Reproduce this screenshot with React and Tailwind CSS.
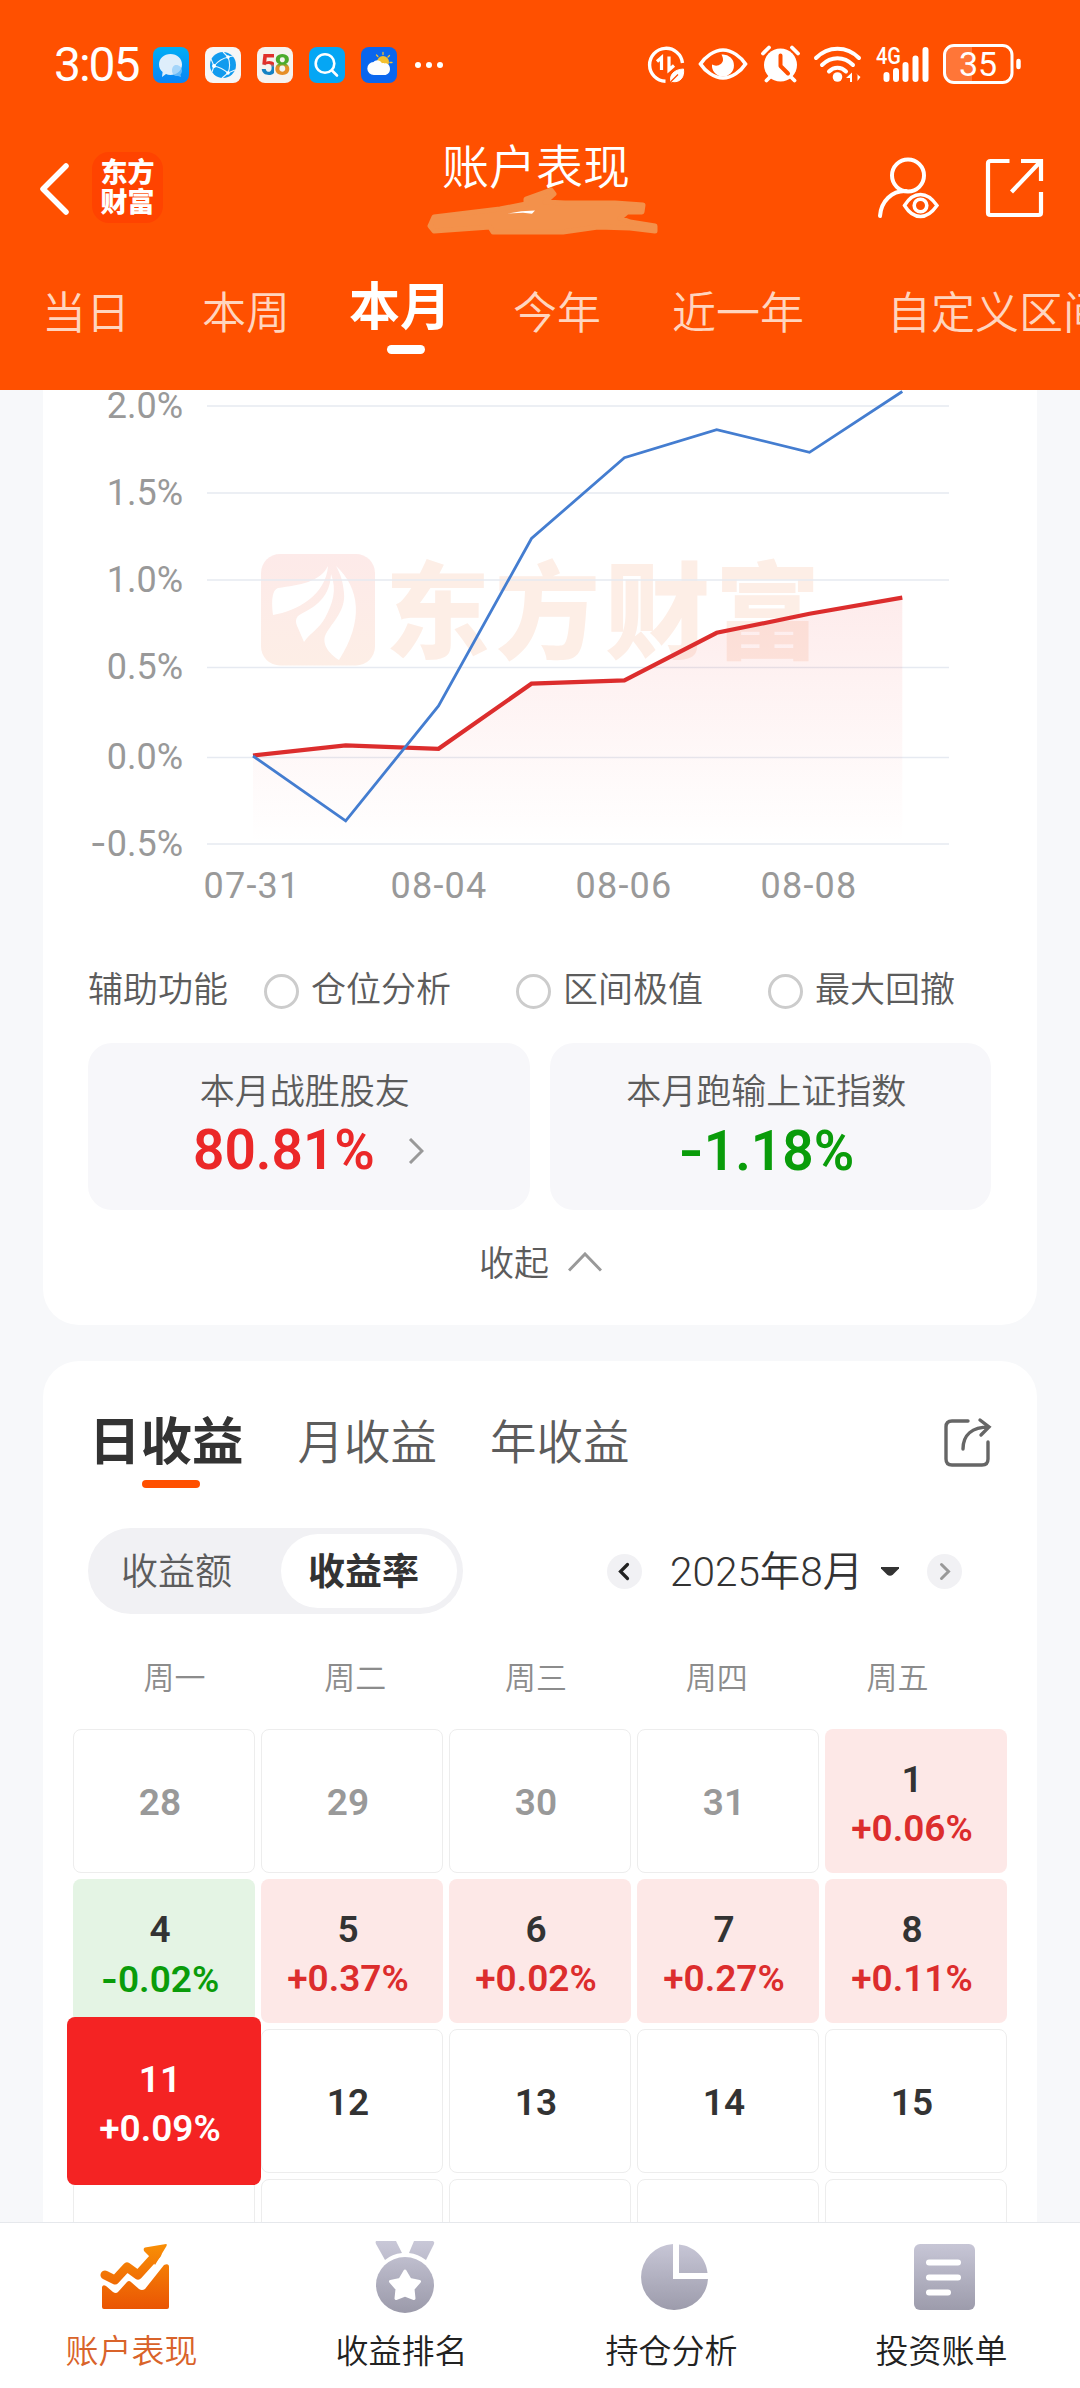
import { useState } from 'react';
import clsx from 'clsx';

const RANGES = [
  { label: '当日', className: 'ml-[42px]' },
  { label: '本周', className: 'ml-[72px]' },
  { label: '本月', className: 'ml-[59px]' },
  { label: '今年', className: 'ml-[62px]' },
  { label: '近一年', className: 'ml-[71px]' },
  { label: '自定义区间', className: 'ml-[83px]' },
];

const Y_TICKS = [
  { label: '2.0%', y: 406 },
  { label: '1.5%', y: 493 },
  { label: '1.0%', y: 580 },
  { label: '0.5%', y: 667.5 },
  { label: '0.0%', y: 757.5 },
  { label: '-0.5%', y: 844 },
];

const X_TICKS = [
  { label: '07-31', x: 252 },
  { label: '08-04', x: 439 },
  { label: '08-06', x: 624 },
  { label: '08-08', x: 809 },
];

const INDEX_LINE = '253,756 345.7,820.8 438.5,706 531.5,538.5 624.4,457.7 716.7,429.6 809.5,452.3 902.3,391.5';
const ACCOUNT_LINE = '253,755.5 345.7,745.4 438.5,748.8 531.5,683.7 624.4,680.3 716.7,632.8 809.5,613.8 902.3,597.6';

const WEEKDAYS = ['周一', '周二', '周三', '周四', '周五'];

const DAYS = [
  { day: 28, muted: true },
  { day: 29, muted: true },
  { day: 30, muted: true },
  { day: 31, muted: true },
  { day: 1, rate: '+0.06%' },
  { day: 4, rate: '-0.02%' },
  { day: 5, rate: '+0.37%' },
  { day: 6, rate: '+0.02%' },
  { day: 7, rate: '+0.27%' },
  { day: 8, rate: '+0.11%' },
  { day: 11, rate: '+0.09%' },
  { day: 12 },
  { day: 13 },
  { day: 14 },
  { day: 15 },
  { day: 18 },
  { day: 19 },
  { day: 20 },
  { day: 21 },
  { day: 22 },
];

function AppIcons() {
  return (
    <div className="flex gap-4">
      <svg className="w-9 h-9" viewBox="0 0 36 36">
        <defs>
          <linearGradient id="msg" x1="0" y1="0" x2="0" y2="1">
            <stop offset="0" stopColor="#00aef5" />
            <stop offset="1" stopColor="#0a84f5" />
          </linearGradient>
        </defs>
        <rect width="36" height="36" rx="8" fill="url(#msg)" />
        <path d="M17.500 7c6.500 0 11.500 4.500 11.500 10.500S24 28 17.500 28c-1.800 0-3.200-.3-4.500-.9L9 30l.6-5C7.300 23 6 20.500 6 17.500 6 11.500 11 7 17.500 7z" fill="#deeefb" />
        <path d="M23 18c3.500 0 6 2.500 6 5.500 0 1.600-.6 3-1.500 4l.5 2.500-3-1c-3 .6-6-1.500-6-5.500 0-3 1.500-5.500 4-5.500z" fill="#8ccbf9" opacity=".7" />
      </svg>
      <svg className="w-9 h-9" viewBox="0 0 36 36">
        <rect width="36" height="36" rx="8" fill="#f6f6f6" />
        <circle cx="18" cy="18" r="13" fill="#129bee" />
        <g fill="none" stroke="#e8f5fd" strokeWidth="1.100">
          <path d="M9 19C13 14 18 11 24 10M9 19c5 1 10 3.500 14 7M23 10c2 5 2 11 0 16M9 19 6 12M9 19l-2 6M23 10l-5-5M23 10l5-1M23 26l-6 5M23 26l7-3" />
        </g>
        <circle cx="9" cy="19" r="2" fill="#fff" />
        <circle cx="23" cy="10" r="1.800" fill="#fff" />
        <circle cx="23" cy="26" r="1.800" fill="#fff" />
      </svg>
      <div className="w-9 h-9 rounded-lg bg-[#f5f3f0] flex items-center justify-center text-[29px] font-bold tracking-[-3px] leading-none">
        <span className="bg-linear-to-b from-[#e0302c] from-45% to-[#1583c4] to-55% bg-clip-text text-transparent">5</span>
        <span className="bg-linear-to-b from-[#4aab2c] from-45% to-[#e68f27] to-55% bg-clip-text text-transparent pr-[2px]">8</span>
      </div>
      <svg className="w-9 h-9" viewBox="0 0 36 36">
        <rect width="36" height="36" rx="8" fill="#05a6f4" />
        <circle cx="16" cy="16.500" r="9.300" fill="none" stroke="#fff" strokeWidth="2.600" />
        <path d="m23 23.500 5 5" stroke="#fff" strokeWidth="2.600" strokeLinecap="round" />
      </svg>
      <svg className="w-9 h-9" viewBox="0 0 36 36">
        <rect width="36" height="36" rx="8" fill="#0a66ee" />
        <circle cx="22" cy="15" r="6" fill="#f3c02f" />
        <path d="M22 5.500v2M15.500 8l1.400 1.500M28.500 8.500 27 10M31 15.500h-2" stroke="#f3c02f" strokeWidth="1.300" strokeLinecap="round" />
        <path d="M13 28a6.500 6.500 0 0 1-.4-13c1.700-2.500 6.400-2.800 8.400 1.200 1-.4 2-.3 2.500.2C27 16 29 18.800 29 22c0 3.500-2.500 6-5.500 6z" fill="#fdfdfd" />
      </svg>
    </div>
  );
}

function StatusIcons() {
  return (
    <svg className="w-[380px] h-[50px]" viewBox="645 40 380 50" fill="none" stroke="#fff">
      {/* data saver */}
      <path d="M682.500 63a16.500 16.500 0 1 0-17 18.300" strokeWidth="3.400" />
      <path d="M661.500 70V57.500l-4.500 4M669 56.500V70l5-4.500" strokeWidth="3.200" />
      <path d="M671 82c-2-7 3-12.500 12.500-13 1 8-3 14-11.500 12.500z" strokeWidth="1" fill="#fff" />
      <path d="m670.500 82 7.500-7.500" stroke="#ff5000" strokeWidth="1.200" />
      {/* eye comfort */}
      <path d="M700.500 64c4.500-7 13.500-14 22.500-14s18 7 22.500 14c-4.500 7-13.500 14-22.500 14s-18-7-22.500-14z" strokeWidth="3.600" />
      <path d="M722.500 54.500a11 11 0 1 1-10.500 10c5 3 11-.5 11-4.500 0-2-.5-3.500-1.500-5.500z" fill="#fff" stroke="none" />
      {/* alarm */}
      <circle cx="780.500" cy="65" r="16.500" fill="#fff" stroke="none" />
      <path d="m763 53.500 6-6M798 53.500l-6-6M770 77l-3.500 3.500M791 77l3.500 3.500" strokeWidth="3.800" strokeLinecap="round" />
      <path d="M780.500 55.500V66l7.500 7.500" stroke="#ff5000" strokeWidth="4" strokeLinecap="round" strokeLinejoin="round" />
      {/* wifi */}
      <path d="M816 58c12-12.500 31-12.500 43 0M822 65c9-9 22-9 31 0M829 71.500c5-5 12-5 17 0" strokeWidth="4" strokeLinecap="round" />
      <circle cx="837.500" cy="77" r="4.800" fill="#fff" stroke="none" />
      <path d="M852 73v9h-2v-4h-4l6-5.500zM855.500 73l5 4-3 4v-6z" fill="#fff" stroke="none" />
      {/* signal */}
      <path d="M886.500 75v4M896 71v8M905.500 65v14M915.500 58.500V79M925.500 50v29" strokeWidth="6" strokeLinecap="round" />
      <text x="876" y="64" fontSize="24" fontWeight="500" fill="#fff" stroke="none" textLength="25" lengthAdjust="spacingAndGlyphs">4G</text>
      {/* battery */}
      <path d="M972 46H955q-10 0-10 10v16q0 10 10 10h17z" fill="#fff" fillOpacity=".22" stroke="none" />
      <rect x="944.500" y="45.500" width="67.500" height="37" rx="9.500" strokeWidth="3" />
      <path d="M1018.500 61v6" strokeWidth="4.500" strokeLinecap="round" />
      <text x="978" y="76" fontSize="34" fill="#fff" stroke="none" textAnchor="middle">35</text>
    </svg>
  );
}

function Header() {
  const [active, setActive] = useState('本月');

  return (
    <header className="h-[390px] bg-[#ff5000] text-white flex-shrink-0">
      <div className="h-[130px] pl-[54px] pr-[55px] flex items-center">
        <span className="w-[99px] text-[48px] leading-none tracking-[-2px]">3:05</span>
        <AppIcons />
        <div className="flex gap-[5px] ml-[18px]">
          <span className="w-1.5 h-1.5 rounded-full bg-white" />
          <span className="w-1.5 h-1.5 rounded-full bg-white" />
          <span className="w-1.5 h-1.5 rounded-full bg-white" />
        </div>
        <div className="ml-auto">
          <StatusIcons />
        </div>
      </div>

      <div className="h-[120px] pl-[37px] pr-[34px] flex items-start">
        <svg className="w-[36px] h-[56px] mt-[31px]" viewBox="0 0 36 56" fill="none" stroke="#fff" strokeWidth="5.500" strokeLinecap="round" strokeLinejoin="round">
          <path d="M29 5 6 28l23 23" />
        </svg>
        <div className="w-[71px] h-[71px] ml-[19px] mt-[22px] rounded-[17px] bg-[#ff4300] flex items-center justify-center text-[27px] leading-[30px] font-black text-center">
          东方
          <br />
          财富
        </div>
        <div className="relative ml-[279px] w-[188px] mt-[13px]">
          <h1 className="text-[47px] leading-[50px] font-[350] whitespace-nowrap">账户表现</h1>
          <svg className="absolute left-[-22px] top-[37px] w-[250px] h-[60px]" viewBox="420 180 250 60" strokeLinejoin="round">
            <path
              d="M434 217 500 209l26-5 0-5 25-9 3 4-9 8 20 1h50l28 2-1 7-15 0-7 6 10 4 25 4v5l-25-3-32-1-35 5h-70l-3-5-56 4-4-5z"
              fill="#f3914b"
              stroke="#f3914b"
              strokeWidth="5"
            />
            <path d="M508 213.500q13-3 27-3l-3 3.200-9-1z" fill="#fff" />
          </svg>
        </div>
        <svg className="ml-auto w-[66px] h-[66px] mt-[26px]" viewBox="876 156 66 66" fill="none" stroke="#fff" strokeWidth="4" strokeLinecap="round">
          <circle cx="909" cy="175.500" r="16" />
          <path d="M881 216c1-15 12-25.500 26-25" />
          <path d="M905.500 205.500c4-6.500 9.500-11 16-11s12 4.500 16.500 11c-4.500 6.500-10 11-16.500 11s-12-4.500-16-11z" strokeWidth="3.400" />
          <circle cx="921.500" cy="205.500" r="6.300" strokeWidth="3.600" />
        </svg>
        <svg className="ml-[43px] mr-[1px] w-[61px] h-[66px] mt-[26px]" viewBox="985 156 61 66" fill="none" stroke="#fff" strokeWidth="4.200">
          <path d="M1010.500 161h-19q-2.500 0-2.500 2.500v49q0 2.500 2.500 2.500h48q2.500 0 2.500-2.500V192M1022 161h20v20M1042 161l-29.500 31" />
        </svg>
      </div>

      <nav className="h-[140px] flex items-start overflow-hidden whitespace-nowrap">
        {RANGES.map(({ label, className }) => (
          <button
            key={label}
            onClick={() => setActive(label)}
            className={clsx(
              'flex flex-col items-center flex-shrink-0',
              className,
              active === label ? 'text-[51px] font-bold mt-[33px] leading-[50px]' : 'text-[44px] font-[350] mt-[39px] leading-[50px] text-[#ffd5bf]'
            )}
          >
            {label}
            {active === label && <span className="w-[38px] h-[9px] mt-[12px] ml-[12px] rounded-full bg-white" />}
          </button>
        ))}
      </nav>
    </header>
  );
}

function Chart() {
  return (
    <svg className="block w-[994px] h-[540px]" viewBox="43 390 994 540">
      <defs>
        <linearGradient id="logo" x1="0" y1="0" x2="0" y2="1">
          <stop offset="0" stopColor="#fdeae9" />
          <stop offset="1" stopColor="#fdeee6" />
        </linearGradient>
        <linearGradient id="area" gradientUnits="userSpaceOnUse" x1="0" y1="598" x2="0" y2="844">
          <stop offset="0" stopColor="#f02828" stopOpacity=".09" />
          <stop offset="1" stopColor="#f02828" stopOpacity="0" />
        </linearGradient>
      </defs>

      {/* brand watermark */}
      <rect x="261" y="554" width="114" height="111.500" rx="19" fill="url(#logo)" />
      <g fill="#fff">
        <path d="M328 566c-8 16-28 19-50 22-5 2-7 9-5 27 24-4 53-20 55-49z" />
        <path d="M331 574c-1 21-12 31-30 40-6 3-6 8-3 14 2 5 4 9 6 14 7-10 15-13 21-24 8-15 12-28 6-44z" />
        <path d="M336 566c24 22 28 55 3 94-8-5-17-14-14-24 5-12 21-24 19-43-1-11-3-18-8-27z" />
      </g>
      <text x="385" y="650" fontSize="105" fontWeight="900" fill="#fdeee6" textLength="435">东方财富</text>

      {Y_TICKS.map(({ label, y }) => (
        <g key={label}>
          <line x1="207" x2="949" y1={y} y2={y} stroke="#e6eaf1" strokeWidth="1.500" />
          <text x="183" y={y + 11.5} fontSize="36" fill="#999" textAnchor="end">
            {label.startsWith('-') && <tspan className="font-['Inter']">-</tspan>}
            {label.replace('-', '')}
          </text>
        </g>
      ))}
      {X_TICKS.map(({ label, x }) => (
        <text key={label} x={x} y="898" fontSize="36" fill="#999" textAnchor="middle" letterSpacing="1.200">{label}</text>
      ))}

      <polygon points={`${ACCOUNT_LINE} 902.3,844 253,844`} fill="url(#area)" />
      <polyline points={ACCOUNT_LINE} fill="none" stroke="#dc2d2d" strokeWidth="4.200" />
      <polyline points={INDEX_LINE} fill="none" stroke="#447dd0" strokeWidth="2.800" />
    </svg>
  );
}

// Roboto's hyphen is too short next to the figures, so the minus comes from Inter
function Rate({ value }) {
  return (
    <>
      {value.startsWith('-') && <span className="font-['Inter']">-</span>}
      {value.replace('-', '')}
    </>
  );
}

function Option({ label, className }) {
  return (
    <label className={clsx('flex items-center', className)}>
      <span className="w-[35px] h-[35px] mr-[12px] rounded-full border-[3px] border-[#ccc]" />
      {label}
    </label>
  );
}

function PerformanceCard() {
  return (
    <section className="mx-[43px] h-[935px] bg-white rounded-b-[36px]">
      <Chart />

      <div className="h-[113px] pl-[45px] pt-[10px] flex items-center text-[35px] font-[350] text-[#5c5c5c] whitespace-nowrap">
        辅助功能
        <Option label="仓位分析" className="ml-[36px]" />
        <Option label="区间极值" className="ml-[65px]" />
        <Option label="最大回撤" className="ml-[65px]" />
      </div>

      <div className="grid grid-cols-2 gap-5 pl-[45px] pr-[46px]">
        <div className="h-[167px] rounded-3xl bg-[#f7f7fa] text-center pt-[25px]">
          <p className="text-[35px] leading-[50px] font-[350] text-[#5c5c5c] pr-[8px]">本月战胜股友</p>
          <div className="flex items-center pl-[105px] h-[64px]">
            <span className="text-[55px] leading-none font-semibold text-[#eb2828]">80.81%</span>
            <svg className="w-4 h-[26px] ml-[33px] mt-[1px]" viewBox="0 0 16 26" fill="none" stroke="#999" strokeWidth="3">
              <path d="m2 1 12 12L2 25" />
            </svg>
          </div>
        </div>
        <div className="h-[167px] rounded-3xl bg-[#f7f7fa] text-center pt-[25px] pr-[8px]">
          <p className="text-[35px] leading-[50px] font-[350] text-[#5c5c5c]">本月跑输上证指数</p>
          <p className="text-[55px] leading-[64px] font-semibold text-[#0a9c0a]">
            <Rate value="-1.18%" />
          </p>
        </div>
      </div>

      <button className="flex items-center h-[110px] ml-[436px] text-[35px] font-[350] text-[#5c5c5c]">
        收起
        <svg className="w-[34px] h-[20px] ml-[19px] mb-[6px]" viewBox="0 0 34 20" fill="none" stroke="#999" strokeWidth="3">
          <path d="M1 18.500 17 2l16 16.500" />
        </svg>
      </button>
    </section>
  );
}

function DayCell({ day, rate, muted, selected }) {
  const isLoss = rate?.startsWith('-');
  return (
    <div
      className={clsx(
        'relative h-[144px] flex flex-col items-center rounded-lg pr-[8px] text-[37px] leading-[49px] font-semibold',
        rate ? 'pt-[26px]' : 'justify-center pt-[3px] border border-[#ededed]',
        rate && !selected && (isLoss ? 'bg-[#e4f4e4]' : 'bg-[#fde8e7]'),
        muted ? 'text-[#999]' : 'text-[#333]'
      )}
    >
      {selected && <span className="absolute -inset-x-1.5 -inset-y-3 rounded-lg bg-[#f42323]" />}
      <span className={clsx('relative', selected && 'text-white')}>{day}</span>
      {rate && (
        <span className={clsx('relative', selected ? 'text-white' : isLoss ? 'text-[#0a9c0a]' : 'text-[#dc2d2d]')}>
          <Rate value={rate} />
        </span>
      )}
    </div>
  );
}

function IncomeCard() {
  const [selectedDay, setSelectedDay] = useState(11);

  return (
    <section className="mx-[43px] mt-9 h-[861px] flex-shrink-0 overflow-hidden bg-white rounded-t-[36px]">
      <div className="h-[167px] pl-[46px] pr-[45px] flex items-start text-[46.500px] leading-[60px] text-[#5c5c5c] font-[350]">
        <div className="mt-[52px] flex flex-col items-center text-[51.500px] font-bold text-[#333]">
          日收益
          <span className="w-[58px] h-2 mt-[7px] ml-[9px] rounded-full bg-[#ff5000]" />
        </div>
        <span className="mt-[52px] ml-[54px]">月收益</span>
        <span className="mt-[52px] ml-[53px]">年收益</span>
        <svg className="ml-auto mt-[56px] w-[50px] h-[52px]" viewBox="944 1417 50 52" fill="none" stroke="#666" strokeWidth="3.400" strokeLinecap="round">
          <path d="M970 1421h-16q-6 0-6 6v32q0 6 6 6h30q6 0 6-6v-17" />
          <path d="M965 1449c0-14 9-22 26-22M982 1420l9 7-8 8" />
        </svg>
      </div>

      <div className="flex items-center pl-[45px]">
        <div className="w-[375px] h-[86px] p-1.5 pl-[33px] rounded-full bg-[#f1f1f4] flex items-center text-[37px]">
          <span className="font-[350] text-[#5c5c5c] pt-[3px]">收益额</span>
          <span className="w-[176px] h-[74px] ml-auto pr-[11px] pt-[3px] rounded-full bg-white flex items-center justify-center font-bold text-[#333]">收益率</span>
        </div>
        <svg className="w-[35px] h-[35px] ml-[144px]" viewBox="0 0 35 35" fill="none">
          <circle cx="17.500" cy="17.500" r="17.500" fill="#f1f1f4" />
          <path d="m20.500 10.500-7 7 7 7" stroke="#222" strokeWidth="3.200" strokeLinecap="round" />
        </svg>
        <span className="ml-[28px] w-[192px] pt-[2px] text-[40.500px] font-[350] text-[#333] whitespace-nowrap">2025年8月</span>
        <svg className="w-[18px] h-[9px] ml-[19px]" viewBox="0 0 18 9" fill="#333">
          <path d="M0 0h18v1.500L12 7.500Q9 10 6 7.500L0 1.500z" />
        </svg>
        <svg className="w-[35px] h-[35px] ml-[28px]" viewBox="0 0 35 35" fill="none">
          <circle cx="17.500" cy="17.500" r="17.500" fill="#f1f1f4" />
          <path d="m14.500 10.500 7 7-7 7" stroke="#999" strokeWidth="3" strokeLinecap="round" />
        </svg>
      </div>

      <div className="grid grid-cols-5 h-[115px] pl-[41px] pr-[49px] pt-[40px] text-[31px] leading-[50px] font-[350] text-center text-[#8c8c8c]">
        {WEEKDAYS.map((name) => (
          <span key={name}>{name}</span>
        ))}
      </div>

      <div className="grid grid-cols-5 gap-1.5 px-[30px]">
        {DAYS.map((item) => (
          <div
            key={item.day}
            className={clsx('cursor-pointer', item.day === selectedDay && 'relative z-10')}
            onClick={() => setSelectedDay(item.day)}
          >
            <DayCell {...item} selected={item.day === selectedDay} />
          </div>
        ))}
      </div>
    </section>
  );
}

function TabItem({ label, active, children }) {
  return (
    <button className={clsx('flex flex-col items-center pr-[7px] text-[33px] leading-[50px] font-[350]', active ? 'text-[#d9632a]' : 'text-[#222]')}>
      <svg className="w-[70px] h-[76px] mt-[14px] ml-[7px] mb-[14px]" viewBox="0 0 70 76">
        {children}
      </svg>
      {label}
    </button>
  );
}

function TabBar() {
  return (
    <nav className="h-[166px] flex-shrink-0 grid grid-cols-4 bg-white border-t border-[#e6e8ec]">
      <TabItem label="账户表现" active>
        <defs>
          <linearGradient id="hot" gradientUnits="userSpaceOnUse" x1="0" y1="6" x2="0" y2="72">
            <stop offset="0" stopColor="#f99006" />
            <stop offset="1" stopColor="#ea5504" />
          </linearGradient>
          <linearGradient id="cool" gradientUnits="userSpaceOnUse" x1="0" y1="4" x2="0" y2="74">
            <stop offset="0" stopColor="#c9c8d8" />
            <stop offset="1" stopColor="#9c9bab" />
          </linearGradient>
        </defs>
        <path d="M5 38 15 43 27 30 38 38 57 17" fill="none" stroke="url(#hot)" strokeWidth="9" strokeLinecap="round" strokeLinejoin="round" />
        <path d="M45 10.500 66 7q1.500 0 .5 2L55 28l-4-7-7-7q-1-3 1-3.500z" fill="url(#hot)" />
        <path d="M2 50q1-3 4-1l7 6q3 2 5 0l9-10q2-2 4 0l8 7q3 2 6 0l19-24q5-2 5 2v40q0 2-2 2H4q-2 0-2-2z" fill="url(#hot)" />
      </TabItem>
      <TabItem label="收益排名">
        <path d="M6 4h20l6 12q-10 1-17 7L6 7q-1-2 0-3zM44 4h19q2 1 1 3l-8 16q-8-6-17-7z" fill="url(#cool)" />
        <ellipse cx="35" cy="48" rx="29" ry="28" fill="url(#cool)" />
        <path d="m35 34 5 8.500 9.500 2-6.500 7.500 1 9.500-9-3.500-9 3.500 1-9.500-6.500-7.500 9.500-2z" fill="#fff" stroke="#fff" strokeWidth="3" strokeLinejoin="round" />
      </TabItem>
      <TabItem label="持仓分析">
        <path d="M33 7v35h35a33.500 33 0 1 1-35-35z" fill="url(#cool)" />
        <path d="M39 7.500c15 1.500 27 13 28.500 28.500H39z" fill="url(#cool)" />
      </TabItem>
      <TabItem label="投资账单">
        <rect x="4" y="7" width="61" height="66" rx="6" fill="url(#cool)" />
        <path d="M19 25.500h29M19 40.500h29M19 55.500h19" stroke="#fff" strokeWidth="6" strokeLinecap="round" />
      </TabItem>
    </nav>
  );
}

export default function App() {
  return (
    <div className="w-[1080px] h-[2388px] flex flex-col overflow-hidden bg-[#f7f8fa] font-['Roboto','Noto_Sans_CJK_SC',sans-serif]">
      <Header />
      <PerformanceCard />
      <IncomeCard />
      <TabBar />
    </div>
  );
}
